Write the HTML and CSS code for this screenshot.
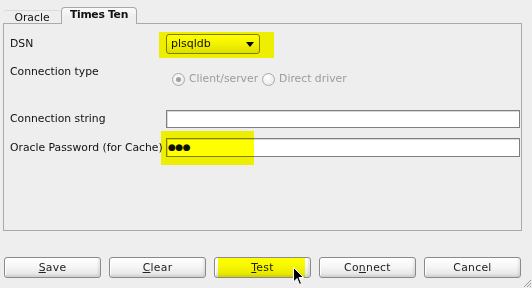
FILE: index.html
```html
<!DOCTYPE html>
<html lang="en">
<head>
    <meta charset="UTF-8">
    <title>Times Ten Connection</title>
    <link rel="stylesheet" href="styles.css">
</head>
<body>
    <div class="dialog">
        <div class="tabs">
            <div class="tab">Oracle</div>
            <div class="tab tab-active">Times Ten</div>
        </div>
        <div class="panel">
            <div class="row row-dsn">
                <span class="label">DSN</span>
                <div class="field-cell">
                    <div class="select">
                        <span>plsqldb</span>
                        <span class="arrow"></span>
                        <span class="mark mark-dsn"></span>
                    </div>
                </div>
            </div>
            <div class="row row-type">
                <span class="label">Connection type</span>
                <div class="radios">
                    <span class="radio radio-on"></span><span class="radio-text">Client/server</span>
                    <span class="radio"></span><span class="radio-text">Direct driver</span>
                </div>
            </div>
            <div class="row row-conn">
                <span class="label">Connection string</span>
                <div class="field"></div>
            </div>
            <div class="row row-pass">
                <span class="label">Oracle Password (for Cache)</span>
                <div class="field field-pass">
                    <span class="dots">&#9679;&#9679;&#9679;</span>
                    <span class="mark mark-pass"></span>
                </div>
            </div>
        </div>
        <div class="buttons">
            <button class="button"><u>S</u>ave</button>
            <button class="button"><u>C</u>lear</button>
            <button class="button button-test">
                <u>T</u>est
                <span class="mark mark-test"></span>
                <svg class="pointer" width="12" height="20" viewBox="0 0 12 20">
                    <path d="M0.5 0.5 L0.5 15 L4 11.5 L6.5 17.5 L8.5 16.5 L6 10.5 L10.5 10.5 Z" fill="#000" stroke="#fff" stroke-width="1"/>
                </svg>
            </button>
            <button class="button">Co<u>n</u>nect</button>
            <button class="button">Cancel</button>
        </div>
        <svg class="grip" width="9" height="9" viewBox="0 0 9 9">
            <path d="M8 1 L1 8 M8 4 L4 8 M8 7 L7 8" stroke="#9a9a9a" stroke-width="1"/>
        </svg>
    </div>
</body>
</html>
```

FILE: styles.css
```css
body {
    margin: 0;
    background: #eeeeee;
    font-family: 'DejaVu Sans', sans-serif;
    font-size: 10.8px;
    color: #111;
}
.dialog {
    position: relative;
    width: 532px;
    height: 288px;
    overflow: hidden;
}
.tabs {
    display: flex;
    align-items: flex-end;
    height: 24px;
    margin-left: 3px;
    margin-bottom: -1px;
    position: relative;
    z-index: 1;
}
.tab {
    box-sizing: border-box;
    width: 58px;
    height: 14px;
    line-height: 13px;
    text-align: center;
    border-top: 1px solid #dadada;
    border-radius: 3px 3px 0 0;
}
.tab-active {
    width: 76px;
    height: 17px;
    line-height: 14px;
    font-weight: bold;
    letter-spacing: -0.3px;
    background: linear-gradient(#fafafa, #eeeeee 60%);
    border: 1px solid #a8a8a8;
    border-bottom: none;
    border-radius: 4px 4px 0 0;
}
.panel {
    box-sizing: border-box;
    width: 519px;
    height: 208px;
    margin-left: 3px;
    padding: 10px 1px 0 0;
    border: 1px solid #aaaaaa;
}
.row {
    display: grid;
    grid-template-columns: 162px 1fr;
    align-items: center;
}
.label {
    padding-left: 6px;
    line-height: 14px;
    white-space: nowrap;
}
.row-dsn {
    height: 20px;
}
.row-type {
    height: 21px;
    margin-top: 11px;
    align-items: start;
}
.row-conn {
    height: 18px;
    margin-top: 24px;
}
.row-pass {
    height: 19px;
    margin-top: 10px;
}
.select {
    position: relative;
    box-sizing: border-box;
    width: 94px;
    height: 20px;
    padding-left: 4px;
    line-height: 18px;
    font-size: 11px;
    border: 1px solid #7c7c7c;
    border-radius: 3px;
    background: linear-gradient(#ffffff, #f2f2f2 50%, #dedede);
}
.arrow {
    position: absolute;
    right: 5px;
    top: 7px;
    border-left: 4px solid transparent;
    border-right: 4px solid transparent;
    border-top: 5px solid #000;
}
.radios {
    display: flex;
    align-items: center;
    align-self: end;
    color: #9c9c9c;
    line-height: 14px;
    padding-left: 6px;
}
.radio {
    box-sizing: border-box;
    width: 13px;
    height: 13px;
    margin-right: 4px;
    border: 1px solid #a9a9a9;
    border-radius: 50%;
    background: radial-gradient(circle at 40% 35%, #ffffff, #e4e4e4);
    position: relative;
}
.radio-on::after {
    content: "";
    position: absolute;
    left: 3px;
    top: 3px;
    width: 5px;
    height: 5px;
    border-radius: 50%;
    background: #a0a0a0;
}
.radio-text {
    margin-right: 4px;
}
.field {
    position: relative;
    box-sizing: border-box;
    height: 18px;
    background: #fff;
    border: 1px solid #808080;
    box-shadow: inset 1px 1px 0 #d8d8d8;
}
.field-pass {
    height: 19px;
}
.dots {
    display: block;
    padding-left: 1px;
    font-size: 9px;
    line-height: 17px;
    letter-spacing: -0.5px;
}
.mark {
    position: absolute;
    background: #ffff00;
    mix-blend-mode: multiply;
    pointer-events: none;
}
.mark-dsn {
    left: -8px;
    right: -15px;
    top: -3px;
    bottom: -5px;
}
.mark-pass {
    left: -6px;
    top: -8px;
    width: 93px;
    height: 34px;
}
.buttons {
    display: flex;
    gap: 8px;
    margin-top: 26px;
    padding-left: 4px;
}
.button {
    position: relative;
    box-sizing: border-box;
    width: 97px;
    height: 21px;
    padding: 0;
    font-family: 'DejaVu Sans', sans-serif;
    font-size: 10.8px;
    letter-spacing: 0.3px;
    color: #222;
    border: 1px solid #8a8a8a;
    border-radius: 3px;
    background: linear-gradient(#ffffff, #f6f6f6 45%, #e2e2e2);
    box-shadow: inset -2px -2px 2px rgba(0, 0, 0, 0.08), inset 1px 1px 0 #fff;
}
.mark-test {
    left: 3px;
    right: 5px;
    top: 0;
    bottom: 0;
}
.pointer {
    position: absolute;
    left: 78px;
    top: 9px;
}
.grip {
    position: absolute;
    right: 0;
    bottom: 0;
}
```
